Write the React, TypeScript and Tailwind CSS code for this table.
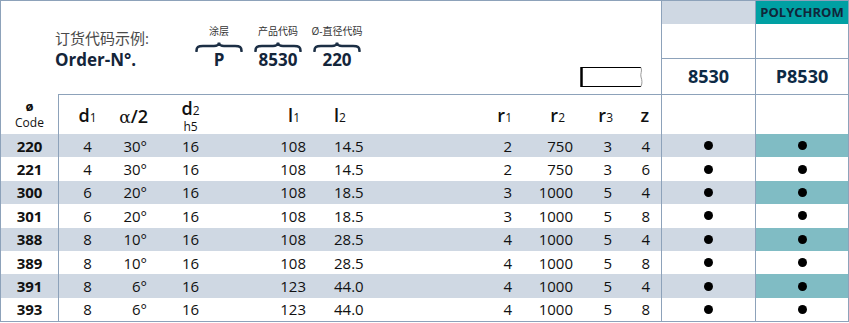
import React from 'react';

const LINE = 'border-[#8da2ba]';
const COLS =
  'grid grid-cols-[58px_57px_32px_85px_74px_113px_93px_61px_39px_49px_94px_92px]';

type Row = { code: string; d1: string; a: string; d2: string; l1: string; l2: string; r1: string; r2: string; r3: string; z: string };

const ROWS: Row[] = [
  { code: '220', d1: '4', a: '30°', d2: '16', l1: '108', l2: '14.5', r1: '2', r2: '750', r3: '3', z: '4' },
  { code: '221', d1: '4', a: '30°', d2: '16', l1: '108', l2: '14.5', r1: '2', r2: '750', r3: '3', z: '6' },
  { code: '300', d1: '6', a: '20°', d2: '16', l1: '108', l2: '18.5', r1: '3', r2: '1000', r3: '5', z: '4' },
  { code: '301', d1: '6', a: '20°', d2: '16', l1: '108', l2: '18.5', r1: '3', r2: '1000', r3: '5', z: '8' },
  { code: '388', d1: '8', a: '10°', d2: '16', l1: '108', l2: '28.5', r1: '4', r2: '1000', r3: '5', z: '4' },
  { code: '389', d1: '8', a: '10°', d2: '16', l1: '108', l2: '28.5', r1: '4', r2: '1000', r3: '5', z: '8' },
  { code: '391', d1: '8', a: '6°', d2: '16', l1: '123', l2: '44.0', r1: '4', r2: '1000', r3: '5', z: '4' },
  { code: '393', d1: '8', a: '6°', d2: '16', l1: '123', l2: '44.0', r1: '4', r2: '1000', r3: '5', z: '8' },
];

function Brace() {
  return (
    <svg width="48" height="11" viewBox="0 0 48 11" className="mt-[4px]">
      <path
        d="M1.5 10 C1.5 6 3 5 8 5 L19 5 C22 5 24 3.5 24 1.5 C24 3.5 26 5 29 5 L40 5 C45 5 46.5 6 46.5 10"
        fill="none"
        stroke="#1c2f45"
        strokeWidth="2.6"
        strokeLinecap="round"
      />
    </svg>
  );
}

function Group({ label, value, w }: { label: string; value: string; w: string }) {
  return (
    <div className={`flex flex-col items-center ${w}`}>
      <div className="mt-[24px] h-[12px] text-[10px] leading-[12px] text-[#333] whitespace-nowrap">{label}</div>
      <Brace />
      <div className="-mt-[2px] text-[17px] leading-[20px] font-bold text-[#14253a]">{value}</div>
    </div>
  );
}

function Sub({ t, s }: { t: string; s: string }) {
  return (
    <span className="text-[18px] leading-[20px] font-semibold">
      {t}
      <span className="text-[12px] font-normal">{s}</span>
    </span>
  );
}

export default function App() {
  return (
    <div className="w-[849px] h-[323px] bg-white font-['Open_Sans','Noto_Sans_CJK_SC',sans-serif] text-[#111]">
      <div className={`border ${LINE}`}>
        {/* Top: order example + coating headers */}
        <div className="flex h-[93px]">
          <div className={`flex w-[661px] border-r ${LINE} pl-[54px]`}>
            <div className="w-[140px] pt-[27px]">
              <div className="text-[15px] leading-[20px] text-[#4a4a4a]">订货代码示例:</div>
              <div className="mt-[2px] text-[17px] leading-[20px] font-bold text-[#14253a]">Order-N°.</div>
            </div>
            <Group label="涂层" value="P" w="w-[48px]" />
            <div className="ml-[10px]">
              <Group label="产品代码" value="8530" w="w-[50px]" />
            </div>
            <div className="ml-[6px]">
              <Group label="Ø-直径代码" value="220" w="w-[56px]" />
            </div>
            <svg width="64" height="20" viewBox="0 0 64 20" className="ml-auto mr-[17px] self-end mb-[7px]">
              <path d="M61 0.5 H1.5 V19.5 H61" fill="none" stroke="#000" strokeWidth="1" />
              <line x1="1.5" y1="0" x2="1.5" y2="20" stroke="#000" strokeWidth="2.5" />
              <path d="M61 0.5 C62.5 4 60 7 61 10 C62 13 62.5 16 61 19.5" fill="none" stroke="#999" strokeWidth="1" />
            </svg>
          </div>
          <div className={`flex w-[94px] flex-col border-r ${LINE}`}>
            <div className="h-[23px] bg-[#cfd8e3]" />
            <div className={`h-[35px] border-b ${LINE}`} />
            <div className="flex h-[35px] items-center justify-center text-[18px] font-bold text-[#0d2a45]">8530</div>
          </div>
          <div className="flex w-[92px] flex-col">
            <div className="flex h-[23px] items-center justify-center bg-[#00a0a3] text-[13px] font-bold text-[#10263a]">
              POLYCHROM
            </div>
            <div className={`h-[35px] border-b ${LINE}`} />
            <div className="flex h-[35px] items-center justify-center text-[18px] font-bold text-[#0d2a45]">P8530</div>
          </div>
        </div>

        {/* Column headers */}
        <div className={`${COLS} h-[40px]`}>
          <div className={`flex flex-col items-center justify-center border-r ${LINE}`}>
            <span className="text-[13px] leading-[16px] font-bold">ø</span>
            <span className="text-[12px] leading-[17px]">Code</span>
          </div>
          <div className={`flex items-center justify-center border-t ${LINE} pt-[3px]`}>
            <Sub t="d" s="1" />
          </div>
          <div className={`flex items-center justify-end border-t ${LINE} pt-[3px]`}>
            <span className="whitespace-nowrap text-[18px] leading-[20px]">
              <span className="font-['DejaVu_Serif',serif] text-[17px]">α</span>
              <span className="font-semibold">/2</span>
            </span>
          </div>
          <div className={`flex flex-col items-center justify-center border-t ${LINE} pt-[2px]`}>
            <span className="text-[18px] leading-[18px] font-semibold">
              d<span className="text-[12px] font-normal">2</span>
            </span>
            <span className="text-[12px] leading-[13px]">h5</span>
          </div>
          <div className={`flex items-center justify-end border-t ${LINE} pr-[7px] pt-[3px]`}>
            <Sub t="l" s="1" />
          </div>
          <div className={`flex items-center border-t ${LINE} pl-[27px] pt-[3px]`}>
            <Sub t="l" s="2" />
          </div>
          <div className={`flex items-center justify-end border-t ${LINE} pr-[1px] pt-[3px]`}>
            <Sub t="r" s="1" />
          </div>
          <div className={`flex items-center justify-end border-t ${LINE} pr-[9px] pt-[3px]`}>
            <Sub t="r" s="2" />
          </div>
          <div className={`flex items-center justify-end border-t ${LINE} pt-[3px]`}>
            <Sub t="r" s="3" />
          </div>
          <div className={`flex items-center justify-end border-t border-r ${LINE} pr-[12px]`}>
            <span className="text-[18px] leading-[20px] font-semibold">z</span>
          </div>
          <div className={`border-t border-r ${LINE}`} />
          <div className={`border-t ${LINE}`} />
        </div>

        {/* Data rows */}
        {ROWS.map((r, i) => {
          const shade = i % 2 === 0;
          const bg = shade ? 'bg-[#cfd8e3]' : 'bg-white';
          return (
            <div key={r.code} className={`${COLS} h-[23.4px] text-[15px] leading-[20px] ${bg}`}>
              <div className={`flex items-center justify-center border-r ${LINE} font-bold`}>{r.code}</div>
              <div className="flex items-center justify-center">{r.d1}</div>
              <div className="flex items-center justify-end pr-[1px]">{r.a}</div>
              <div className="flex items-center justify-center">{r.d2}</div>
              <div className="flex items-center justify-end pr-[1px]">{r.l1}</div>
              <div className="flex items-center pl-[27px]">{r.l2}</div>
              <div className="flex items-center justify-end pr-[1px]">{r.r1}</div>
              <div className="flex items-center justify-end pr-[1px]">{r.r2}</div>
              <div className="flex items-center justify-end pr-[1px]">{r.r3}</div>
              <div className={`flex items-center justify-end border-r ${LINE} pr-[11px]`}>{r.z}</div>
              <div className={`flex items-center justify-center border-r ${LINE}`}>
                <div className="h-[9px] w-[9px] rounded-full bg-black" />
              </div>
              <div className={`flex items-center justify-center ${shade ? 'bg-[#80bcc4]' : 'bg-white'}`}>
                <div className="h-[9px] w-[9px] rounded-full bg-black" />
              </div>
            </div>
          );
        })}
      </div>
    </div>
  );
}
